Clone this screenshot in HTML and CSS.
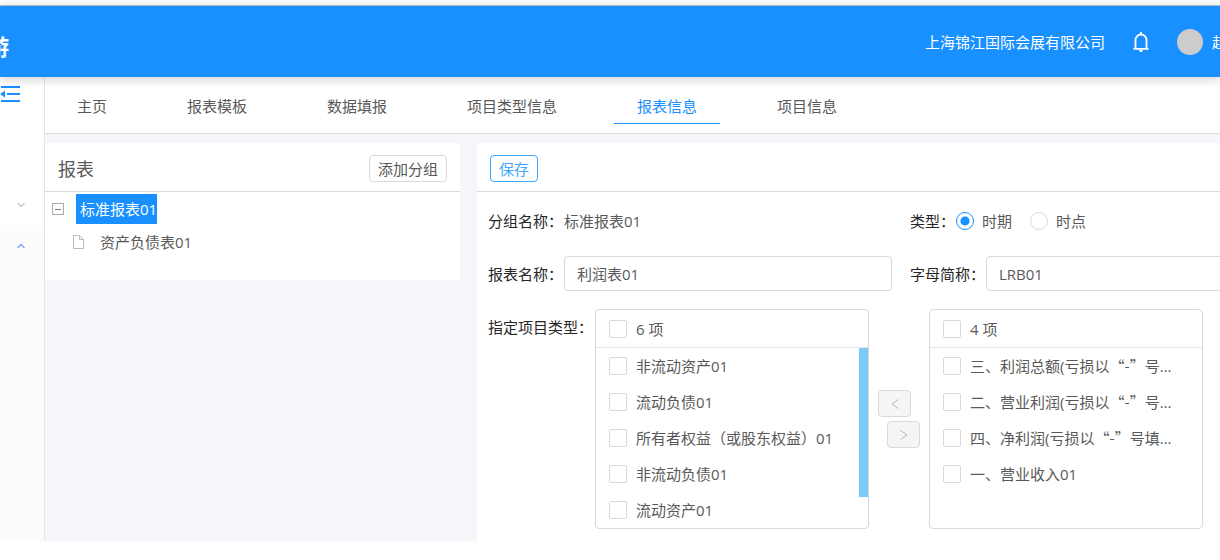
FILE: index.html
```html
<!DOCTYPE html>
<html lang="zh-CN">
<head>
<meta charset="utf-8">
<title>报表信息</title>
<link rel="stylesheet" href="styles.css">
</head>
<body>
<header class="topbar">
  <div class="brand">游</div>
  <div class="account">
    <span class="company">上海锦江国际会展有限公司</span>
    <button class="icon-btn bell" type="button" aria-label="通知">
      <svg width="18" height="22" viewBox="0 0 18 22" fill="none" stroke="currentColor" stroke-width="1.800"><path d="M3.500 17.500V9a5.500 5.500 0 0 1 11 0v8.500M1.500 17.800h15M9 1v3"/><path d="M7 19h4l-1 2H8z" fill="currentColor" stroke="none"/></svg>
    </button>
    <span class="avatar"></span>
    <span class="user">赵</span>
  </div>
</header>
<div class="layout">
  <aside class="sidebar">
    <button class="icon-btn fold" type="button" aria-label="收起菜单">
      <svg width="20" height="18" viewBox="0 0 20 18" fill="none" stroke="currentColor" stroke-width="2"><path d="M1 2h19M7 9h13M1 16h19"/><path d="M0 9l5-3.500v7z" fill="currentColor" stroke="none"/></svg>
    </button>
    <button class="icon-btn menu-item" type="button" aria-label="展开">
      <svg width="8" height="6" viewBox="0 0 8 6" fill="none" stroke="currentColor"><path d="M.5 1L4 4.500 7.500 1"/></svg>
    </button>
    <button class="icon-btn menu-item open" type="button" aria-label="折叠">
      <svg width="8" height="6" viewBox="0 0 8 6" fill="none" stroke="currentColor" stroke-width="1.300"><path d="M.5 5L4 1.500 7.500 5"/></svg>
    </button>
  </aside>
  <div class="content">
    <nav class="tabs">
      <a class="tab" href="#">主页</a>
      <a class="tab" href="#">报表模板</a>
      <a class="tab" href="#">数据填报</a>
      <a class="tab" href="#">项目类型信息</a>
      <a class="tab active" href="#">报表信息</a>
      <a class="tab" href="#">项目信息</a>
    </nav>
    <div class="panels">
      <section class="card tree-card">
        <div class="card-head">
          <h2 class="card-title">报表</h2>
          <button class="btn" type="button">添加分组</button>
        </div>
        <div class="tree">
          <div class="tree-row">
            <svg width="12" height="12" viewBox="0 0 12 12" fill="none" stroke="#aaa"><rect x=".5" y=".5" width="11" height="11"/><path d="M3 6.500h6" stroke="#777"/></svg>
            <span class="node selected">标准报表01</span>
          </div>
          <div class="tree-row child">
            <svg width="11" height="14" viewBox="0 0 11 14" fill="none" stroke="#bbb"><path d="M.5.5h6l4 4v9H.5zM6.500.5v4h4"/></svg>
            <span class="node">资产负债表01</span>
          </div>
        </div>
      </section>
      <section class="card form-card">
        <div class="card-head">
          <button class="btn primary" type="button">保存</button>
        </div>
        <form class="form">
          <div class="field">
            <span class="label">分组名称：</span>
            <span>标准报表01</span>
          </div>
          <div class="field" role="radiogroup" aria-labelledby="kind">
            <span class="label" id="kind">类型：</span>
            <label class="radio"><input type="radio" name="kind" checked>时期</label>
            <label class="radio"><input type="radio" name="kind">时点</label>
          </div>
          <div class="field">
            <label class="label" for="name">报表名称：</label>
            <input class="text" id="name" type="text" value="利润表01">
          </div>
          <div class="field">
            <label class="label" for="code">字母简称：</label>
            <input class="text" id="code" type="text" value="LRB01">
          </div>
          <div class="field wide">
            <span class="label">指定项目类型：</span>
            <div class="transfer">
              <div class="list">
                <label class="list-head"><input type="checkbox"><span>6 项</span></label>
                <div class="list-body">
                  <label class="item"><input type="checkbox"><span class="item-text">非流动资产01</span></label>
                  <label class="item"><input type="checkbox"><span class="item-text">流动负债01</span></label>
                  <label class="item"><input type="checkbox"><span class="item-text">所有者权益（或股东权益）01</span></label>
                  <label class="item"><input type="checkbox"><span class="item-text">非流动负债01</span></label>
                  <label class="item"><input type="checkbox"><span class="item-text">流动资产01</span></label>
                  <div class="thumb"></div>
                </div>
              </div>
              <div class="moves">
                <button class="move" type="button" disabled aria-label="移到左侧"><svg width="8" height="10" viewBox="0 0 8 10" fill="none" stroke="currentColor"><path d="M7.500.5L1 5l6.500 4.500"/></svg></button>
                <button class="move" type="button" disabled aria-label="移到右侧"><svg width="8" height="10" viewBox="0 0 8 10" fill="none" stroke="currentColor"><path d="M.5.5L7 5 .5 9.500"/></svg></button>
              </div>
              <div class="list">
                <label class="list-head"><input type="checkbox"><span>4 项</span></label>
                <div class="list-body">
                  <label class="item"><input type="checkbox"><span class="item-text">三、利润总额(亏损以<span class="quoted">“-”</span>号填列)01</span></label>
                  <label class="item"><input type="checkbox"><span class="item-text">二、营业利润(亏损以<span class="quoted">“-”</span>号填列)01</span></label>
                  <label class="item"><input type="checkbox"><span class="item-text">四、净利润(亏损以<span class="quoted">“-”</span>号填列)01</span></label>
                  <label class="item"><input type="checkbox"><span class="item-text">一、营业收入01</span></label>
                </div>
              </div>
            </div>
          </div>
        </form>
      </section>
    </div>
  </div>
</div>
</body>
</html>
```

FILE: styles.css
```css
* { box-sizing: border-box; }

body {
  margin: 0;
  padding-top: 5px;
  overflow-x: hidden;
  background: #fff;
  color: #595959;
  font: 15px/22px "Open Sans", "Noto Sans CJK SC", sans-serif;
}

button, input { font: inherit; color: inherit; margin: 0; }

svg { display: block; flex: none; }

.icon-btn {
  display: flex;
  padding: 0;
  border: 0;
  background: none;
}

/* Top bar */
.topbar {
  position: relative;
  z-index: 1;
  display: flex;
  align-items: center;
  justify-content: space-between;
  height: 72px;
  border-top: 1px solid #b5bcc4;
  background: #1890ff;
  color: #fff;
  white-space: nowrap;
  box-shadow: 0 2px 10px rgba(0, 0, 0, .2);
}

.brand {
  margin-left: -13px;
  padding-top: 8px;
  font-size: 22px;
  font-weight: 700;
}

.account {
  display: flex;
  align-items: center;
  margin-right: -7px;
}

.company { margin-right: 27px; }
.bell { margin-right: 27px; }

.avatar {
  width: 26px;
  height: 26px;
  margin-right: 9px;
  border-radius: 50%;
  background: #ccc;
}

/* Frame */
.layout { display: flex; }

.sidebar {
  display: flex;
  flex-direction: column;
  flex: none;
  width: 45px;
  border-right: 1px solid #f3dede;
}

.fold { padding: 8px 0 82px; color: #1890ff; }

.menu-item {
  height: 40px;
  padding: 17px 17px;
  color: #999;
}

.menu-item.open {
  flex: 1;
  padding-top: 18px;
  background: #fcfcfc;
  color: #7fa4ff;
}

.content {
  flex: 1;
  min-width: 0;
  background: #f4f6fa;
}

.tabs {
  display: flex;
  gap: 34px;
  padding: 12px 9px 9px;
  border-bottom: 1px solid #d9dbde;
  background: #fff;
}

.tab {
  padding: 6px 23px;
  border-bottom: 1px solid transparent;
  color: #595959;
  text-decoration: none;
  white-space: nowrap;
}

.tab.active { border-color: #1890ff; color: #1890ff; }

.panels {
  display: flex;
  align-items: flex-start;
  gap: 17px;
  padding-top: 9px;
}

.card { background: #fff; }
.tree-card { flex: 0 0 415px; }
.form-card { flex: 1; min-width: 0; overflow: hidden; }

.card-head {
  display: flex;
  align-items: center;
  justify-content: space-between;
  height: 49px;
  padding: 3px 13px 0;
  border-bottom: 1px solid #d9d9d9;
}

.card-title { margin: 0; font-size: 18px; font-weight: 400; }

.btn {
  height: 27px;
  padding: 0 8px;
  border: 1px solid #d9d9d9;
  border-radius: 4px;
  background: #fff;
  line-height: 22px;
}

.btn.primary { border-color: #40a9ff; color: #40a9ff; }

/* Tree */
.tree {
  display: flex;
  flex-direction: column;
  gap: 3px;
  padding: 2px 7px 23px;
}

.tree-row { display: flex; align-items: center; gap: 12px; }
.tree-row.child { padding-left: 21px; }
.node { padding: 4px 0 4px 4px; }
.node.selected { background: #1890ff; color: #fff; }

/* Form */
.form {
  display: grid;
  grid-template-columns: repeat(2, minmax(404px, 1fr));
  gap: 18px;
  padding: 11px 11px 12px;
}

.field { display: flex; align-items: center; min-height: 35px; }
.field.wide { grid-column: 1 / -1; align-items: flex-start; }
.field.wide .label { margin-right: 2px; padding-top: 7px; }

.label { flex: none; margin-right: 1px; color: #262626; }

.text {
  flex: 1;
  min-width: 0;
  height: 35px;
  padding: 0 12px;
  border: 1px solid #d9d9d9;
  border-radius: 4px;
  background: #fff;
}

.radio {
  display: flex;
  align-items: center;
  gap: 8px;
  margin-right: 18px;
}

input[type="radio"], input[type="checkbox"] {
  appearance: none;
  flex: none;
  width: 18px;
  height: 18px;
  border: 1px solid #d9d9d9;
  background: #fff;
}

input[type="radio"] { border-radius: 50%; }
input[type="checkbox"] { border-radius: 2px; }

input[type="radio"]:checked {
  border-color: #1890ff;
  background: radial-gradient(circle, #1890ff 4px, #fff 5px);
}

/* Transfer */
.transfer { display: flex; align-items: center; gap: 9px; }

.list {
  flex: none;
  align-self: stretch;
  width: 274px;
  overflow: hidden;
  border: 1px solid #d9d9d9;
  border-radius: 4px;
}

.list-head, .item {
  display: flex;
  align-items: center;
  gap: 9px;
  padding: 0 26px 0 13px;
}

.list-head { height: 38px; border-bottom: 1px solid #e4e4e4; }
.list-body { position: relative; height: 180px; }
.item { height: 36px; }

.item-text {
  overflow: hidden;
  text-overflow: ellipsis;
  white-space: nowrap;
}

.quoted { font-family: "Noto Sans CJK SC", sans-serif; }

.thumb {
  position: absolute;
  top: 0;
  right: 0;
  width: 9px;
  height: 149px;
  background: #7cc8f8;
}

.moves {
  display: flex;
  flex-direction: column;
  gap: 4px;
  width: 42px;
}

.move {
  display: flex;
  align-items: center;
  justify-content: center;
  width: 33px;
  height: 27px;
  padding: 0;
  border: 1px solid #d9d9d9;
  border-radius: 4px;
  background: #f5f5f5;
  color: #b8b8b8;
}

.move:last-child { align-self: flex-end; }
```
